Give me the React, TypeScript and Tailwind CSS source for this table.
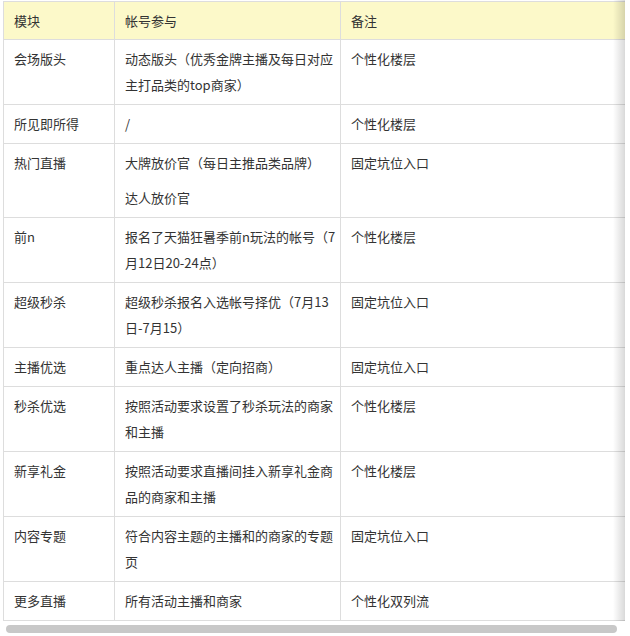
const rows: { name: string; account: string[]; note: string }[] = [
  { name: '会场版头', account: ['动态版头（优秀金牌主播及每日对应主打品类的top商家）'], note: '个性化楼层' },
  { name: '所见即所得', account: ['/'], note: '个性化楼层' },
  { name: '热门直播', account: ['大牌放价官（每日主推品类品牌）', '达人放价官'], note: '固定坑位入口' },
  { name: '前n', account: ['报名了天猫狂暑季前n玩法的帐号（7月12日20-24点）'], note: '个性化楼层' },
  { name: '超级秒杀', account: ['超级秒杀报名入选帐号择优（7月13日-7月15）'], note: '固定坑位入口' },
  { name: '主播优选', account: ['重点达人主播（定向招商）'], note: '固定坑位入口' },
  { name: '秒杀优选', account: ['按照活动要求设置了秒杀玩法的商家和主播'], note: '个性化楼层' },
  { name: '新享礼金', account: ['按照活动要求直播间挂入新享礼金商品的商家和主播'], note: '个性化楼层' },
  { name: '内容专题', account: ['符合内容主题的主播和的商家的专题页'], note: '固定坑位入口' },
  { name: '更多直播', account: ['所有活动主播和商家'], note: '个性化双列流' },
];

const cell = 'border border-[#dddddd] pl-[10px] pr-[3px] align-top text-left font-normal leading-[26px]';

export default function App() {
  return (
    <div className="w-[630px] h-[636px] bg-white text-[13px] text-[#333333] font-['Noto_Sans_CJK_SC','Noto_Sans',sans-serif]">
      <div className="relative w-[625px] overflow-hidden pt-px pl-[3px]">
        <table className="table-fixed border-collapse w-[662px]">
          <colgroup>
            <col className="w-[111px]" />
            <col className="w-[226px]" />
            <col />
          </colgroup>
          <thead>
            <tr className="bg-[#fcf9c9]">
              <th className={`${cell} pt-[6px] pb-[5px]`}>模块</th>
              <th className={`${cell} pt-[6px] pb-[5px]`}>帐号参与</th>
              <th className={`${cell} pt-[6px] pb-[5px]`}>备注</th>
            </tr>
          </thead>
          <tbody>
            {rows.map((row) => (
              <tr key={row.name}>
                <td className={`${cell} py-[6px]`}>{row.name}</td>
                <td className={`${cell} py-[6px]`}>
                  {row.account.map((line, i) => (
                    <p key={i} className={i < row.account.length - 1 ? 'mb-[9px]' : ''}>
                      {line}
                    </p>
                  ))}
                </td>
                <td className={`${cell} py-[6px]`}>{row.note}</td>
              </tr>
            ))}
          </tbody>
        </table>
        <div className="absolute top-0 right-0 bottom-0 w-[12px] bg-gradient-to-r from-transparent to-black/15" />
      </div>
      <div className="ml-[6px] mt-[4px] h-[8px] w-[611px] rounded-full bg-[#c8c8c8]" />
    </div>
  );
}
